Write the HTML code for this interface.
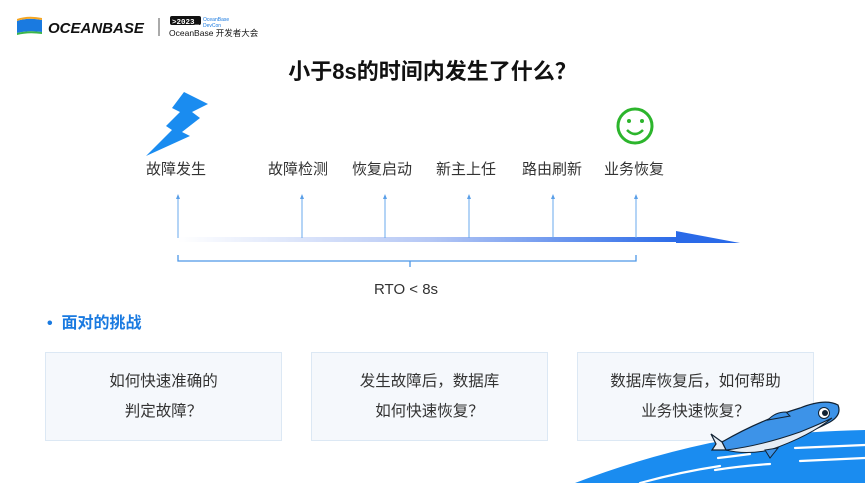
<!DOCTYPE html>
<html><head><meta charset="utf-8"><style>
body{margin:0;width:865px;height:483px;overflow:hidden;background:#fff;position:relative;font-family:"Liberation Sans","Noto Sans CJK SC",sans-serif;color:#222}
.a{position:absolute}
.lbl{position:absolute;top:158px;font-size:15px;color:#333;transform:translateX(-50%);white-space:nowrap}
.box{position:absolute;top:352px;height:89px;width:237px;background:#f5f8fc;border:1px solid #dce8f4;text-align:center;font-size:15.5px;line-height:30px;color:#333;box-sizing:border-box;padding-top:14px}
</style></head><body>
<div class="box" style="left:45px">如何快速准确的<br>判定故障？</div>
<div class="box" style="left:311px">发生故障后，数据库<br>如何快速恢复？</div>
<div class="box" style="left:577px">数据库恢复后，如何帮助<br>业务快速恢复？</div>
<svg class="a" style="left:0;top:0" width="865" height="483">
<path d="M17 21 Q28 17 42 20 L42 32 Q28 30 17 33Z" fill="#1a7ae0"/>
<path d="M17 19 Q28 15 42 18 L42 20 Q28 17 17 21Z" fill="#f5a623"/>
<path d="M17 33 Q28 30 42 32 L42 34 Q28 32 17 35Z" fill="#3bb54a"/>
<text x="48" y="33" font-family="Liberation Sans" font-weight="bold" font-style="italic" font-size="15" fill="#111">OCEANBASE</text>
<line x1="159" y1="18" x2="159" y2="36" stroke="#555" stroke-width="1"/>
<rect x="170" y="16" width="31" height="9" rx="2" fill="#111"/>
<text x="172" y="24" font-size="7.5" font-weight="bold" fill="#fff" font-family="Liberation Mono">&gt;2023_</text>
<text x="203" y="21" font-size="5" fill="#1a7ae0">OceanBase</text>
<text x="203" y="27" font-size="5" fill="#1a7ae0">DevCon</text>
<text x="169" y="36" font-size="8.5" fill="#111" font-family="Liberation Sans,Noto Sans CJK SC,sans-serif">OceanBase 开发者大会</text>
<path d="M184 92 L208 104 L192 112 L200 118 L182 132 L190 136 L146 156 L172 130 L166 126 L180 112 L172 108Z" fill="#1a8cf0"/>
<circle cx="635" cy="126" r="17" fill="none" stroke="#2cb52c" stroke-width="3"/>
<circle cx="629" cy="121" r="2" fill="#2cb52c"/><circle cx="642" cy="121" r="2" fill="#2cb52c"/>
<path d="M627 130 Q635 138 643 130" fill="none" stroke="#2cb52c" stroke-width="2.5"/>
<defs><linearGradient id="g" x1="0" x2="1"><stop offset="0" stop-color="#fff"/><stop offset="0.5" stop-color="#b6c8f5"/><stop offset="1" stop-color="#2a6ae8"/></linearGradient></defs>
<rect x="178" y="237" width="500" height="5" fill="url(#g)"/>
<path d="M676 231 L740 243 L676 243Z" fill="#2a6ae8"/>
<g stroke="#6aa8ec" stroke-width="1" fill="none">
<line x1="178" y1="196" x2="178" y2="238"/><line x1="302" y1="196" x2="302" y2="238"/><line x1="385" y1="196" x2="385" y2="238"/><line x1="469" y1="196" x2="469" y2="238"/><line x1="553" y1="196" x2="553" y2="238"/><line x1="636" y1="196" x2="636" y2="238"/>
<path d="M178 255 L178 261 L636 261 L636 255 M410 261 L410 267" stroke="#4d98e8" stroke-width="1.3"/>
</g>
<g fill="#5a9fe8"><path d="M176 199 L178 194 L180 199Z"/><path d="M300 199 L302 194 L304 199Z"/><path d="M383 199 L385 194 L387 199Z"/><path d="M467 199 L469 194 L471 199Z"/><path d="M551 199 L553 194 L555 199Z"/><path d="M634 199 L636 194 L638 199Z"/></g>
<!-- wave -->
<path d="M575 483 Q640 458 710 443 Q780 432 865 430 L865 483Z" fill="#1a8cf0"/>
<g stroke="#fff" stroke-width="2.2" fill="none" stroke-linecap="round">
<path d="M640 483 Q680 472 720 466"/>
<path d="M715 470 Q740 466 770 464"/>
<path d="M800 461 L865 458"/>
<path d="M795 448 L865 445"/>
<path d="M718 458 Q735 456 750 454"/>
</g>
<!-- fish -->
<path d="M722 442 Q760 420 800 408 Q825 398 838 405 Q842 415 830 422 Q800 438 760 448 Q740 452 726 450Z" fill="#3d93e8" stroke="#123" stroke-width="1.2"/>
<path d="M726 450 Q760 446 800 432 Q820 424 832 418 Q810 436 770 450 Q745 455 726 450Z" fill="#e6edf5" stroke="#123" stroke-width="1"/>
<path d="M722 442 L711 434 L716 444 L712 450 L726 450Z" fill="#e6edf5" stroke="#123" stroke-width="1.2"/>
<path d="M768 420 Q775 412 786 412 L790 416Z" fill="#3d93e8" stroke="#123" stroke-width="1"/>
<path d="M765 450 L770 458 L778 448Z" fill="#3d93e8" stroke="#123" stroke-width="1"/>
<circle cx="824" cy="413" r="5.5" fill="#fff" stroke="#123"/><circle cx="825" cy="413" r="3" fill="#123"/>
</svg>
<div class="a" style="left:0;width:865px;top:54px;text-align:center;font-size:22px;font-weight:bold;color:#111">小于8s的时间内发生了什么？</div>
<div class="lbl" style="left:176px">故障发生</div>
<div class="lbl" style="left:298px">故障检测</div>
<div class="lbl" style="left:382px">恢复启动</div>
<div class="lbl" style="left:466px">新主上任</div>
<div class="lbl" style="left:552px">路由刷新</div>
<div class="lbl" style="left:634px">业务恢复</div>
<div class="a" style="left:374px;top:281px;font-size:15px;color:#333">RTO &lt; 8s</div>
<div class="a" style="left:47px;top:309px;font-size:16px;font-weight:bold;color:#1a7ae0">•&nbsp; 面对的挑战</div>
</body></html>
